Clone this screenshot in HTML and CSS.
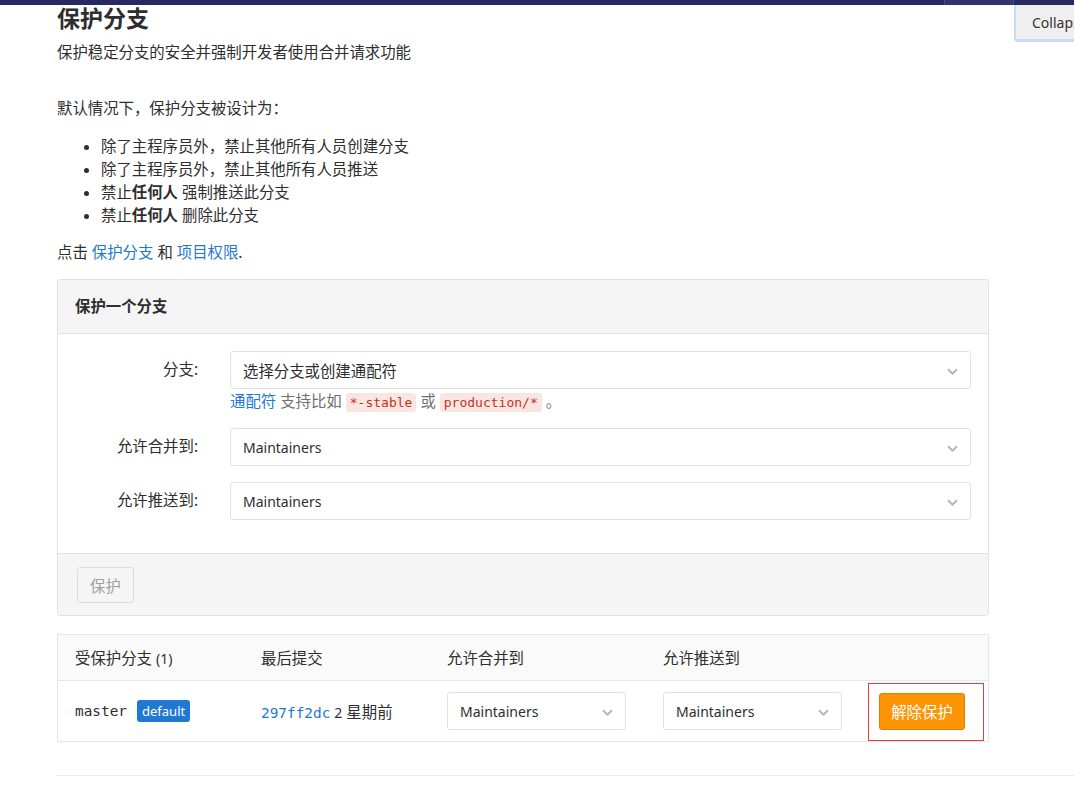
FILE: index.html
```html
<!DOCTYPE html>
<html lang="zh">
<head>
<meta charset="utf-8">
<link rel="stylesheet" href="styles.css">
</head>
<body>
<div class="topbar"><div class="topbar-seg"></div></div>
<button class="collapse-btn">Collapse</button>
<main class="content">
  <h1 class="title">保护分支</h1>
  <p class="subtitle">保护稳定分支的安全并强制开发者使用合并请求功能</p>
  <p class="intro">默认情况下，保护分支被设计为：</p>
  <ul class="rules">
    <li>除了主程序员外，禁止其他所有人员创建分支</li>
    <li>除了主程序员外，禁止其他所有人员推送</li>
    <li>禁止<strong>任何人</strong> 强制推送此分支</li>
    <li>禁止<strong>任何人</strong> 删除此分支</li>
  </ul>
  <p class="more">点击 <a href="#">保护分支</a> 和 <a href="#">项目权限</a>.</p>

  <section class="panel">
    <div class="panel-header">保护一个分支</div>
    <div class="panel-body">
      <div class="form-row">
        <label class="form-label">分支:</label>
        <div class="form-field">
          <div class="select select-wide"><span>选择分支或创建通配符</span><svg class="chev" viewBox="0 0 10 6" width="11" height="7"><path d="M1 1l4 4 4-4" fill="none" stroke="#b5b5b5" stroke-width="1.8"/></svg></div>
          <div class="help"><a href="#">通配符</a> 支持比如 <code>*-stable</code> 或 <code>production/*</code> 。</div>
        </div>
      </div>
      <div class="form-row">
        <label class="form-label">允许合并到:</label>
        <div class="form-field">
          <div class="select select-wide"><span class="latin">Maintainers</span><svg class="chev" viewBox="0 0 10 6" width="11" height="7"><path d="M1 1l4 4 4-4" fill="none" stroke="#b5b5b5" stroke-width="1.8"/></svg></div>
        </div>
      </div>
      <div class="form-row">
        <label class="form-label">允许推送到:</label>
        <div class="form-field">
          <div class="select select-wide"><span class="latin">Maintainers</span><svg class="chev" viewBox="0 0 10 6" width="11" height="7"><path d="M1 1l4 4 4-4" fill="none" stroke="#b5b5b5" stroke-width="1.8"/></svg></div>
        </div>
      </div>
    </div>
    <div class="panel-footer">
      <button class="btn-disabled">保护</button>
    </div>
  </section>

  <section class="table">
    <div class="trow thead">
      <div class="c1">受保护分支 <span class="latin">(1)</span></div>
      <div class="c2">最后提交</div>
      <div class="c3">允许合并到</div>
      <div class="c4">允许推送到</div>
      <div class="c5"></div>
    </div>
    <div class="trow tbody">
      <div class="c1"><span class="mono">master</span> <span class="badge">default</span></div>
      <div class="c2"><a href="#" class="mono">297ff2dc</a> <span class="latin">2</span> 星期前</div>
      <div class="c3"><div class="select select-sm"><span class="latin">Maintainers</span><svg class="chev" viewBox="0 0 10 6" width="11" height="7"><path d="M1 1l4 4 4-4" fill="none" stroke="#b5b5b5" stroke-width="1.8"/></svg></div></div>
      <div class="c4"><div class="select select-sm"><span class="latin">Maintainers</span><svg class="chev" viewBox="0 0 10 6" width="11" height="7"><path d="M1 1l4 4 4-4" fill="none" stroke="#b5b5b5" stroke-width="1.8"/></svg></div></div>
      <div class="c5"><div class="highlight"><button class="btn-warning">解除保护</button></div></div>
    </div>
  </section>
  <hr class="divider">
</main>
</body>
</html>
```
FILE: styles.css
```css
html, body {
  margin: 0;
  padding: 0;
  background: #fff;
}
body {
  font-family: "Noto Sans", "Noto Sans CJK SC", sans-serif;
  font-size: 15.4px;
  color: #2e2e2e;
  overflow: hidden;
}
.latin {
  font-size: 14px;
}
.topbar {
  height: 5px;
  background: #292961;
  display: flex;
  justify-content: flex-end;
}
.topbar-seg {
  width: 68px;
  margin-right: 60px;
  background: #33336b;
  border-left: 1px solid #4a4a7a;
  border-right: 1px solid #4a4a7a;
}
.collapse-btn {
  position: absolute;
  top: 5px;
  left: 1014px;
  width: 90px;
  height: 37px;
  padding: 0 0 0 16px;
  text-align: left;
  background: #efefef;
  border: none;
  border-left: 2px solid #c3dcf7;
  border-bottom: 3px solid #c3dcf7;
  border-radius: 0 0 0 4px;
  font-family: "Noto Sans", sans-serif;
  font-size: 14px;
  color: #333;
}
.content {
  margin-left: 57px;
}
.title {
  margin: 0;
  font-size: 23px;
  line-height: 26px;
  font-weight: 700;
  color: #2e2e2e;
}
.subtitle {
  margin: 11px 0 0;
  line-height: 22px;
}
.intro {
  margin: 34px 0 0;
  line-height: 22px;
}
.rules {
  margin: 15px 0 0;
  padding-left: 44px;
  line-height: 23px;
}
.rules strong { font-weight: 700; }
.more {
  margin: 15px 0 0;
  line-height: 22px;
}
a { color: #1f78d1; text-decoration: none; }

.panel {
  margin-top: 15px;
  width: 930px;
  border: 1px solid #e2e2e2;
  border-radius: 3px;
}
.panel-header {
  height: 53px;
  line-height: 54px;
  padding-left: 17px;
  background: #f5f5f5;
  border-bottom: 1px solid #e2e2e2;
  font-weight: 700;
}
.panel-body {
  padding: 17px 17px 33px 0;
  display: flex;
  flex-direction: column;
  gap: 16px;
}
.form-row {
  display: flex;
}
.form-label {
  width: 140px;
  text-align: right;
  padding-right: 32px;
  line-height: 38px;
}
.form-field {
  flex: 1;
}
.select {
  box-sizing: border-box;
  height: 38px;
  border: 1px solid #e2e2e2;
  border-radius: 3px;
  background: #fff;
  display: flex;
  align-items: center;
  justify-content: space-between;
  padding: 0 12px 0 12px;
}
.select-wide { width: 741px; }
.chev { margin-top: 2px; }
.help {
  margin-top: 2px;
  height: 21px;
  line-height: 21px;
  color: #707070;
}
.help a { color: #1f78d1; }
code {
  font-family: "DejaVu Sans Mono", "Liberation Mono", monospace;
  font-size: 13px;
  line-height: 1;
  background: #fbe5e1;
  color: #c0341d;
  padding: 2px 4px;
  border-radius: 3px;
}
.panel-footer {
  background: #f5f5f5;
  border-top: 1px solid #e2e2e2;
  padding: 13px 19px 12px;
}
.btn-disabled {
  height: 36px;
  padding: 0 12px;
  background: #f5f5f5;
  border: 1px solid #dcdcdc;
  border-radius: 3px;
  color: #a0a0a0;
  font-family: "Noto Sans", "Noto Sans CJK SC", sans-serif;
  font-size: 15.4px;
}

.table {
  margin-top: 18px;
  width: 930px;
  border: 1px solid #e7e7e7;
}
.trow {
  display: flex;
  align-items: center;
}
.thead {
  height: 45px;
  background: #fafafa;
  border-bottom: 1px solid #e7e7e7;
}
.tbody {
  height: 60px;
}
.c1 { padding-left: 17px; box-sizing: border-box; width: 203px; }
.c2 { width: 186px; }
.c3 { width: 216px; }
.c4 { width: 205px; }
.c5 { flex: 1; }
.mono {
  font-family: "DejaVu Sans Mono", "Liberation Mono", monospace;
  font-size: 14.4px;
}
.badge {
  display: inline-block;
  background: #1f78d1;
  color: #fff;
  font-size: 13px;
  line-height: 22px;
  padding: 0 5px;
  border-radius: 3px;
  margin-left: 6px;
}
.select-sm { width: 179px; }
.highlight {
  box-sizing: border-box;
  width: 116px;
  height: 58px;
  border: 1px solid #e53c3c;
  display: flex;
  align-items: center;
  padding-left: 10px;
  margin-top: 1px;
}
.btn-warning {
  height: 37px;
  width: 86px;
  background: #fc9403;
  border: 1px solid #de7e00;
  border-radius: 3px;
  color: #fff;
  font-family: "Noto Sans", "Noto Sans CJK SC", sans-serif;
  font-size: 15.4px;
}
.divider {
  margin: 33px 0 0;
  border: 0;
  border-top: 1px solid #ececec;
}
```
